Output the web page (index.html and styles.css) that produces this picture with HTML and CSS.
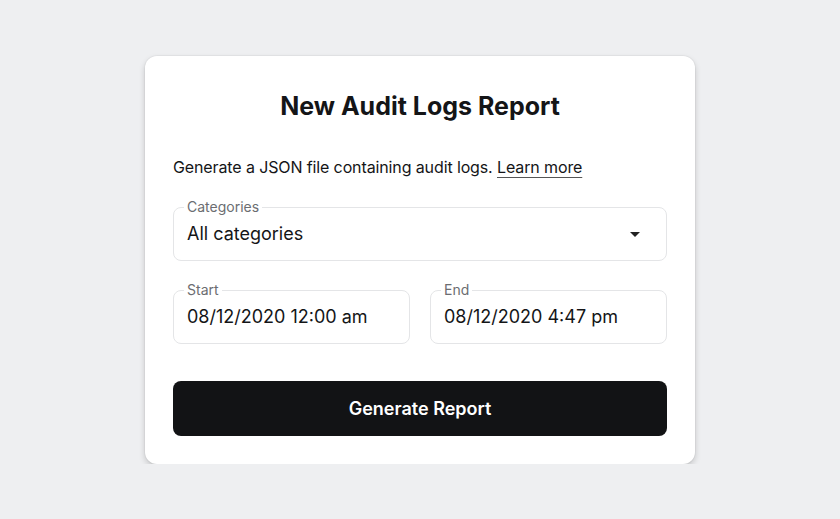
FILE: index.html
```html
<!DOCTYPE html>
<html lang="en">
<head>
  <meta charset="UTF-8" />
  <title>New Audit Logs Report</title>
  <link rel="stylesheet" href="styles.css">
</head>
<body>
  <div class="card">
    <h1>New Audit Logs Report</h1>
    <p class="intro">Generate a JSON file containing audit logs. <a href="#">Learn more</a></p>

    <fieldset class="field">
      <legend>Categories</legend>
      <div class="value select">
        <span>All categories</span>
        <svg class="caret" width="10" height="5" viewBox="0 0 10 5"><path d="M0 0h10L5 5z" fill="#222"/></svg>
      </div>
    </fieldset>

    <div class="dates">
      <fieldset class="field">
        <legend>Start</legend>
        <div class="value">08/12/2020 12:00 am</div>
      </fieldset>
      <fieldset class="field">
        <legend>End</legend>
        <div class="value">08/12/2020 4:47 pm</div>
      </fieldset>
    </div>

    <button class="generate">Generate Report</button>
  </div>
</body>
</html>
```

FILE: styles.css
```css
body {
  margin: 0;
  font-family: Inter, 'Noto Sans', sans-serif;
  background: #eeeff1;
  color: #141517;
}
.card {
  width: 550px;
  box-sizing: border-box;
  margin: 56px auto 0;
  padding: 34px 28px 28px;
  background: #fff;
  border-radius: 12px;
  box-shadow: 0 3px 6px rgba(0,0,0,0.18), 0 0 0 1px rgba(0,0,0,0.03);
}
h1 {
  margin: 0;
  font-size: 25px;
  line-height: 32px;
  font-weight: 700;
  text-align: center;
}
.intro {
  margin: 33px 0 20px;
  font-size: 16px;
  line-height: 24px;
  letter-spacing: -0.12px;
}
.intro a {
  color: #141517;
  text-decoration: underline;
  text-decoration-color: #555;
  text-underline-offset: 4px;
}
.field {
  margin: 0;
  padding: 0 13px;
  border: 1px solid #e4e5e7;
  border-radius: 8px;
  min-width: 0;
}
.field legend {
  margin-left: -3px;
  padding: 0 3px;
  font-size: 14px;
  line-height: 16px;
  color: #6b6d71;
}
.value {
  padding: 7px 0 14px;
  font-size: 18px;
  line-height: 24px;
}
.select {
  display: flex;
  align-items: center;
  justify-content: space-between;
}
.caret {
  margin-right: 13px;
}
.dates {
  display: grid;
  grid-template-columns: 1fr 1fr;
  gap: 20px;
  margin-top: 21px;
}
.generate {
  display: block;
  width: 100%;
  height: 55px;
  margin-top: 37px;
  border: none;
  border-radius: 8px;
  background: #121315;
  color: #fff;
  font-family: inherit;
  font-size: 18px;
  font-weight: 600;
  cursor: pointer;
}
```
